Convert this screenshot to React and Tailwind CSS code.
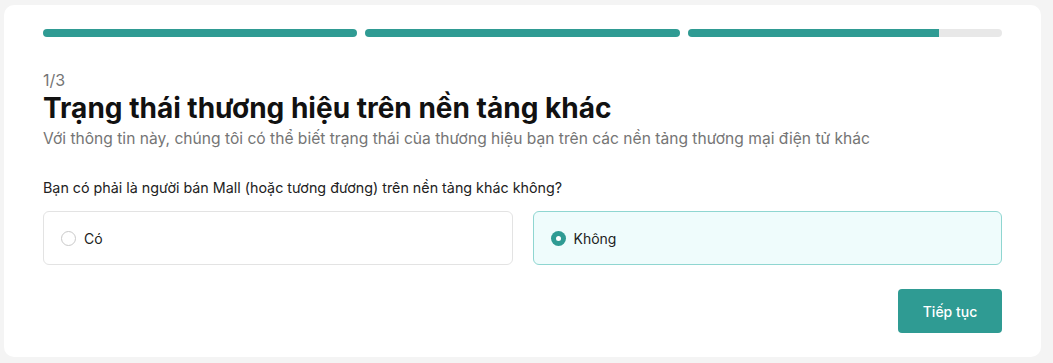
import React, { useState } from 'react';

const steps = [100, 100, 80];

export default function App() {
  const [choice, setChoice] = useState('no');

  return (
    <div className="min-h-screen bg-[#f4f4f4] pt-[5px] pl-[4px] pr-[12px]" style={{ fontFamily: 'Inter, "Noto Sans", sans-serif' }}>
      <div className="w-[1037px] rounded-[10px] bg-white px-[39px] pt-[24px] pb-[24px]">
        <div className="flex gap-2">
          {steps.map((pct, i) => (
            <div key={i} className="h-2 flex-1 overflow-hidden rounded-full bg-[#e8e8e8]">
              <div className="h-full bg-[#2f9b93]" style={{ width: `${pct}%` }} />
            </div>
          ))}
        </div>

        <div className="mt-[32px] text-[16px] leading-[22px] text-[#757575]">1/3</div>
        <h1 className="text-[28px] font-bold leading-[35px] text-[#111]">Trạng thái thương hiệu trên nền tảng khác</h1>
        <p className="mt-[2px] text-[15.6px] leading-[22px] text-[#757575]">
          Với thông tin này, chúng tôi có thể biết trạng thái của thương hiệu bạn trên các nền tảng thương mại điện tử khác
        </p>

        <div className="mt-[28px] text-[14.3px] leading-[20px] text-[#222]">
          Bạn có phải là người bán Mall (hoặc tương đương) trên nền tảng khác không?
        </div>

        <div className="mt-[13px] grid grid-cols-2 gap-5">
          {[
            { id: 'yes', label: 'Có' },
            { id: 'no', label: 'Không' },
          ].map((opt) => {
            const on = choice === opt.id;
            return (
              <button
                key={opt.id}
                onClick={() => setChoice(opt.id)}
                className={
                  on
                    ? 'flex h-[54px] items-center gap-[8px] rounded-[6px] border border-[#8fd6d1] bg-[#effcfc] px-[17px] text-left'
                    : 'flex h-[54px] items-center gap-[8px] rounded-[6px] border border-[#e3e3e3] bg-white px-[17px] text-left'
                }
              >
                {on ? (
                  <span className="flex h-[15px] w-[15px] items-center justify-center rounded-full bg-[#2f9b93]">
                    <span className="h-[5px] w-[5px] rounded-full bg-white" />
                  </span>
                ) : (
                  <span className="h-[15px] w-[15px] rounded-full border border-[#c9c9c9] bg-white" />
                )}
                <span className="text-[14px] text-[#222]">{opt.label}</span>
              </button>
            );
          })}
        </div>

        <div className="mt-[24px] flex justify-end">
          <button className="h-[44px] w-[104px] rounded-[4px] bg-[#2f9b93] text-[14px] font-medium text-white">Tiếp tục</button>
        </div>
      </div>
    </div>
  );
}
